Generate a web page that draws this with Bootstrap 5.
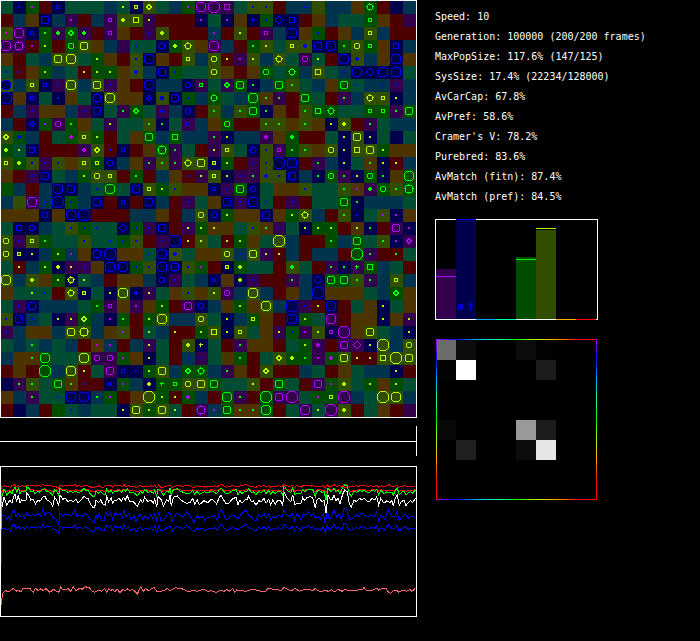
<!DOCTYPE html>
<html lang="en">
<head>
<meta charset="utf-8">
<meta name="viewport" content="width=device-width, initial-scale=1">
<title>Population simulation</title>
<link rel="stylesheet" href="https://cdn.jsdelivr.net/npm/bootstrap@5.3.0/dist/css/bootstrap.min.css">
<style>
  body { background: #000; color: #fff; font-family: "DejaVu Sans Mono", "Liberation Mono", monospace; font-size: 10px; line-height: 20px; }
  svg { shape-rendering: crispEdges; }
  .world { flex: 0 1 417px; min-width: 0; }
  .world svg { width: 100%; height: auto; }
  .panel { flex: 1 0 240px; padding: 7px 0 0 18px; }
  .strip { margin-top: 8px; }
  .history { margin-top: 10px; }
  .bars { margin-top: 12px; }
  .matrix { margin-top: 19px; }
  .sex-label { fill: #00f; font-size: 10px; }
</style>
<script src="https://cdn.jsdelivr.net/npm/bootstrap@5.3.0/dist/js/bootstrap.bundle.min.js"></script>
</head>
<body>
<main class="d-flex align-items-start">
  <section class="world" aria-label="World">
    <svg id="grid" class="d-block" viewBox="0 0 417 418" role="img" aria-label="Habitat grid"></svg>
    <svg class="d-block strip" viewBox="0 0 417 30" aria-hidden="true">
      <path d="M0 15h417v1h-417zM416 0h1v30h-1z" fill="#fff"/>
    </svg>
    <svg id="history" class="d-block history" viewBox="0 0 417 151" role="img" aria-label="History"></svg>
  </section>
  <section class="panel" aria-label="Statistics">
    <ul class="list-unstyled mb-0 text-nowrap">
      <li>Speed: 10</li>
      <li>Generation: 100000 (200/200 frames)</li>
      <li>MaxPopSize: 117.6% (147/125)</li>
      <li>SysSize: 17.4% (22234/128000)</li>
      <li>AvCarCap: 67.8%</li>
      <li>AvPref: 58.6%</li>
      <li>Cramer's V: 78.2%</li>
      <li>Purebred: 83.6%</li>
      <li>AvMatch (fitn): 87.4%</li>
      <li>AvMatch (pref): 84.5%</li>
    </ul>
    <svg class="d-block bars" width="163" height="101" viewBox="0 0 163 101" role="img" aria-label="Population by type">
      <rect x="0.5" y="0.5" width="162" height="100" fill="none" stroke="#fff"/>
      <path fill="#33004d" d="M1 50h20v50h-20z"/>
      <path fill="#00004d" d="M21 0h20v100h-20z"/>
      <path fill="#004d00" d="M81 38h20v62h-20z"/>
      <path fill="#334d00" d="M101 11h20v89h-20z"/>
      <path fill="#b300ff" d="M1 57h20v1h-20z"/>
      <path fill="#00f" d="M21 0h20v1h-20z"/>
      <path fill="#0f0" d="M81 40h20v1h-20z"/>
      <path fill="#b3ff00" d="M101 9h20v1h-20z"/>
      <path fill="#00aaff" d="M41 100h20v1h-20z"/>
      <path fill="#00ffaa" d="M61 100h20v1h-20z"/>
      <path fill="#ffaa00" d="M121 100h20v1h-20z"/>
      <path fill="#f00" d="M141 100h20v1h-20z"/>
      <text class="sex-label" x="23" y="91">m</text>
      <text class="sex-label" x="33" y="91">f</text>
    </svg>
    <svg id="matrix" class="d-block matrix" width="163" height="161" viewBox="0 0 163 161" role="img" aria-label="Mating matrix"></svg>
  </section>
</main>
<script>
const dark = {p:'#33004d', b:'#00004d', c:'#00334d', t:'#004d33', g:'#004d00', y:'#334d00', o:'#4d3300', r:'#4d0000'};
const bright = {p:'#b300ff', b:'#0000ff', g:'#00ff00', y:'#b3ff00'};

// One token per cell: ground colour, then optional marker colour and marker shape.
const rows = `
t bb1 gp1 r bbs t t t c ty1 bys yyd t c gp1 ppO ppB ppq t yb1 yb1 r c cb1 y c c o ggk r b c
r c o bbC c pp1 r c pps yy2 yyq py1 r r r bp1 t bp1 o bb+ gb1 bbD bbq r o c t t ggs o r p
yp1 ppO bbs gg1 pg2 ggd pg2 r pps o r pb1 yy2 r r r cp1 r yy1 r pps c bbO o gb1 r o c yys c r r
ppO ppK rp1 gy1 r ggc yyC o c p tb1 t bbk gy2 yyk o ppO c r gg1 yy1 t yys yb2 bbC bbO gg1 yyc ggs o bbq c
o r t c yyC yyO t gy1 o r yb1 bbO o r yys c yyc ry1 pp1 yy1 c yyk t ppc ty1 r bbO yb2 c o bbO o
tb1 rb1 o gy1 c t ry1 gy1 gy1 o yb2 c bbC gb1 t t yyc o r o ggc t ggk c yyQ t cb1 bbO bbD bbO bbO t
ybO c yys bbs pb1 yyO c yyC pb1 o r bbO c c bbc pgs t pgd ggC bg1 c ggC yg1 t c o ggC tb1 c cb1 pb1 c
bbB o bbd t bb1 o t bbK yyO o o bbd ybs bbC gb1 c ggk t c ggO og1 pg1 r ggC t r pg1 c yyk yys by1 c
r c pb1 o o c pb1 bbC t pg1 ggd t pb2 c bbc r yg1 c yg1 ggC bg1 o r yg1 ggq ggk t t ggs ggs pg1 ggC
c r bbd gp1 ppc gg1 o t py1 t t yg1 bg1 t pbs c o ggc r r yg1 yg1 o yg1 o by1 yy2 r pg1 t c c
yyd gb2 c r t gp2 yys gy1 r t o ggC c ggq c c pg1 by1 c c pp2 o gg2 r r t by1 yyC by1 t b t
gy2 ty1 bbq r r r pp2 yyd rb1 bbs r o ggK pg1 t r py1 yys t bbk yb1 pps gg1 yg1 o yyc by1 yyq yyC gy1 o o
yys gy2 yb1 pb1 yb1 o yys gys bbk c o pg1 yg1 pg1 yyk yyC bys gy1 r pb1 yb1 bbB bbO r pg1 c by1 t og1 by1 ry1 c
o r pb1 bbC t c gy1 yyc yys r gg1 r c o rb1 py1 yys by1 pb1 pg1 yb2 yb1 bbC c bg1 ggc pg1 by1 ggc bg1 o ggO
g c r c bbO bbC c tb1 ggO t bbC yys gy1 yb1 o o bbs pb1 ggC bbc t o o yb1 t t yg1 op1 pg2 ggc yg1 ggK
c y ppO cb1 bbB gb1 c bbC r bbs r bbC c r pb1 t o bbC pb1 bbO tb1 r pb1 r t t ggC bg1 c c c t
o o o bbc o bbO bbB r r r c c o r c yyc bbc gy1 o o bbC o gy1 yyk c r yg1 bb1 t yp1 bp1 o
t bbq bbc c t yb1 gb1 tb1 t bbD gb1 pb1 bbC r py1 gy1 oy1 o t yb1 og1 pb1 t by1 gy1 gy1 r oy1 bg1 r ppC bp1
yyc pb1 yys gg1 t t yb1 t tb1 gb1 yb1 r pb1 bbB ry1 yy1 t ry1 gy1 o t yyB c r r gg1 c ggC t yg1 bp1 ppd
yyc bys by1 c gy1 cp1 o bbK bbB o o tb1 bbO yb2 t o o yyc cb1 yyC py1 ry1 c r c c r ggB pg1 r rg1 t
t ry1 c gy1 by2 py1 pb1 o bbO bbO gb1 yb1 bbO bbK yb1 gp1 r bys gy2 t t r yg2 t r pg1 bg1 pg+ ggq c t r
yyO c yy2 o gy1 byk ty1 c r o o c bbc pb1 t c bbs o by2 pb1 r r pg1 c bbD ggC ggC yg1 pg1 c yys c
o t ty1 tb1 r yyk bys t by1 yyO bb2 py1 t o yb1 o yy1 ppc c yyO c r o c bbB o o o t c ggd o
t pb1 bbC c c c t gg1 pps o pp1 o gy1 r ppC bbc c o gy1 o yyO c bbB pb1 ry1 bbO r t o by1 t o
yb1 bbC cb1 t by1 py1 gyd c bp1 gg1 r gy1 yyO c c yyc t by1 c gys o r bbO gy1 t ppO r o o by1 o py1
pb1 c o o c yyC yyK c o yp1 r ty1 c ry1 r gy1 yyq by1 yys t o py1 gb1 pp1 yy1 bps ppB o yyC t c by1
t c tg1 c t c r op1 cp1 r c py1 t r yy2 by+ t r pg1 o o r t gy1 pp2 r ppC ppD by1 yyB c yyc
c o og1 ggO t t yyO ppc ppc gp1 o by1 t r cb1 pb1 t o gg1 r t yyd gy2 gg1 pp1 gp2 yyC ry1 ry1 yyq yyB yyC
r o r ggB c yyO ry1 t ppC bbs bb1 gy1 yyC c ggd ggk c pg1 o r yyd r r c t r o t c c by1 r
b pg1 yg1 t ggC og1 rb1 r bb2 gp1 c by2 gg+ ggs yyc yyC ggC t t yy1 r ggC t r ppC gp1 yy2 t gy1 o gy1 t
o c pg1 t tb1 bbO bbO cg1 gp1 r o yyB gy1 ry1 gp2 c r ggO pg1 r ggB ppC ppB t gp1 gys ppB c t yyB yyO c
r b c r g tb1 c t t by1 yyC gy1 yyC ty1 r ppK cp1 ggC og1 og1 ggO r t ppO ty1 ppB yy2 r t o r p
`.trim().split('\n').map(line => line.split(' '));

// Marker outlines, drawn around the point (0, 0).
const octagon = (r, k) => `M${-k} ${-r}H${k}L${r} ${-k}V${k}L${k} ${r}H${-k}L${-r} ${k}V${-k}Z`;
const shapes = {
  s: 'M-1.5 -1.5H1.5V1.5H-1.5Z',
  q: 'M-2.5 -2.5H2.5V2.5H-2.5Z',
  Q: 'M-2.5 -2.5H2.5V2.5H-2.5Z',
  d: 'M0 -2.5L2.5 0L0 2.5L-2.5 0Z',
  D: 'M0 -4L4 0L0 4L-4 0Z',
  c: octagon(2.5, 1.5),
  k: octagon(2.5, 1.5) + 'M-.5 -4V-2M-.5 2V4M-4 -.5H-2M2 -.5H4',
  C: octagon(3.5, 2.5),
  K: octagon(3.5, 2.5) + 'M-.5 -5V-3M-.5 3V5M-5 -.5H-3M3 -.5H5',
  O: octagon(4.5, 2.5),
  B: octagon(5.5, 2.5)
};
const solids = {
  '1': 'M-1 -1h2v2h-2z',
  '2': 'M-1 -2h2v1h1v2h-1v1h-2v-1h-1v-2h1z',
  '+': 'M-1 -2h1v1h2v1h-2v2h-1v-2h-1v-1h1z'
};

let ground = '', marks = '';
rows.forEach((row, j) => row.forEach((cell, i) => {
  const x = i * 13, y = 1 + j * 13;
  ground += `<rect x="${x}" y="${y}" width="13" height="13" fill="${dark[cell[0]]}"/>`;
  if (cell.length < 3) return;
  const hue = cell[1], kind = cell[2], at = `transform="translate(${x + 6} ${y + 6})"`;
  marks += solids[kind]
    ? `<path ${at} d="${solids[kind]}" fill="${bright[hue]}"/>`
    : `<path ${at} d="${shapes[kind]}" fill="${dark[hue]}" stroke="${bright[hue]}"/>`;
}));
document.getElementById('grid').innerHTML = ground + marks +
  '<rect x="0.5" y="0.5" width="416" height="417" fill="none" stroke="#fff"/>';

// History samples: "time:level" in thirds of a unit, level measured down from the plot's zero.
const parse = text => text.trim().split(/\s+/).map(p => p.split(':').map(Number));
const pref = parse(`3:265 6:262 12:230 20:256 30:240 36:250 40:232 45:222 50:245 55:225 60:250 65:240 72:242 78:240 80:220 86:225 92:240 100:238 106:252 114:240 120:244 128:232 134:228 140:240 150:245 158:258 164:232 170:240 176:258 180:225 188:238 196:235 204:245 212:240 220:245 228:238 234:248 244:240 252:228 258:235 264:235 270:250 278:262 284:262 288:240 296:248 302:240 308:252 316:255 320:230 326:245 334:235 338:250 344:240 350:240 358:235 364:245 370:232 376:240 382:228 390:245 400:245 406:252 412:260 422:240 428:248 434:232 444:245 452:240 460:250 464:235 470:262 474:230 484:240 490:258 500:240 506:246 510:225 514:258 520:232 532:228 540:238 550:245 560:250 570:248 578:235 584:252 592:240 598:254 606:248 612:242 624:248
634:238 640:240 650:252 658:232 664:226 670:238 678:252 686:250 696:238 708:232 714:254 720:240 726:250 734:240 742:238 746:228 754:245 760:242 768:256 776:242 784:245 792:235 798:250 806:238 812:255 818:240 826:252 834:240 842:242 848:258 852:215 858:228 864:238 872:245 878:225 884:254 892:250 902:252 908:232 914:242 922:232 930:230 938:232 946:265 950:240 958:235 966:245 972:240 978:278 984:225 990:238 996:240 1002:225 1008:242 1014:235 1020:252 1028:222 1034:210 1042:215 1048:250 1054:262 1062:240 1070:245 1078:235 1086:240 1092:235 1100:243 1108:245 1116:235 1124:240 1130:230 1136:256 1142:235 1152:250 1160:242 1170:248 1176:242 1180:258 1186:235 1192:225 1198:256 1204:245 1212:240 1218:258 1224:248 1232:242 1238:248 1246:235`);
const cap = parse(`3:436 6:288 14:287 20:297 26:290 32:302 36:280 42:270 48:290 54:280 60:290 68:283 74:294 80:278 88:288 98:284 106:288 114:280 122:288 130:265 134:285 142:278 150:278 158:292 168:296 176:312 180:278 188:288 196:282 206:285 216:285 226:270 230:290 238:284 246:290 254:280 264:288 272:300 282:308 288:285 292:296 298:280 304:300 312:302 318:275 324:288 332:275 338:300 346:275 352:287 360:280 368:294 372:270 378:290 386:280 392:297 402:289 408:305 414:290 420:282 428:298 436:288 444:296 452:285 460:298 464:278 470:305 476:275 482:300 490:300 498:290 506:278 512:280 516:305 522:290 530:280 540:285 550:292 560:275 568:285 574:294 582:308 592:285 598:295 606:288 614:300 624:292
634:290 644:286 652:300 658:280 664:268 670:280 678:300 686:296 696:285 706:289 714:296 722:285 730:276 738:270 746:286 754:290 762:300 768:302 776:284 784:292 792:280 798:295 806:282 812:300 818:289 826:295 834:285 846:292 852:270 860:285 870:290 876:280 884:302 890:282 898:290 904:300 910:280 918:286 926:275 934:288 940:280 946:297 954:289 962:298 970:280 976:312 982:272 988:300 996:285 1002:270 1010:290 1018:283 1024:300 1032:265 1040:270 1048:300 1058:295 1068:284 1076:291 1084:278 1094:286 1104:290 1114:284 1122:290 1130:276 1136:302 1144:284 1154:298 1160:282 1166:270 1174:288 1184:290 1190:275 1198:302 1206:290 1216:282 1224:295 1234:288 1246:292`);
const size = parse(`3:556 8:520 16:512 28:515 40:505 48:514 54:510 62:516 68:506 90:506 100:516 108:503 114:513 122:506 130:512 138:506 150:517 160:508 176:517 182:500 188:509 205:506 212:514 220:500 228:512 240:504 246:508 256:500 268:503 276:514 284:517 298:510 306:514 314:505 320:516 326:506 332:512 338:507 344:515 352:508 360:518 370:508 376:512 384:506 390:514 396:508 402:512 412:522 422:500 430:514 436:506 446:512 462:502 470:514 482:514 496:510 502:505 510:512 526:503 546:506 566:516 580:510 592:514 602:510 612:508 624:515
634:512 648:517 664:510 672:514 680:508 688:514 698:505 704:518 710:510 724:512 738:514 754:509 768:510 784:514 798:513 804:504 820:508 838:510 846:510 852:502 862:508 874:512 886:505 898:514 914:508 928:508 938:512 946:505 954:512 964:516 974:511 986:514 994:509 1004:516 1014:508 1026:514 1034:508 1050:512 1070:512 1080:508 1088:508 1092:502 1098:510 1120:510 1130:505 1136:511 1144:507 1158:505 1166:518 1172:520 1182:511 1190:510 1196:516 1210:511 1220:514 1230:508 1236:514 1244:506`);

const trace = (data, colour, from, to, gain, start) =>
  `<polyline fill="none" stroke="${colour}" points="` + data.map(([t, v], n) => {
    const level = n === 0 && start ? start : to + (v - from) * gain;
    return `${(t / 3).toFixed(1)},${((level - 138) / 3).toFixed(1)}`;
  }).join(' ') + '"/>';

document.getElementById('history').innerHTML =
  trace(size, '#ff6666', 0, 0, 1) +
  trace(cap, '#0000ff', 287, 324, 0.6, 370) +
  trace(cap, '#0000ff', 0, 0, 1) +
  trace(cap, '#ff0000', 287, 198, 0.25, 265) +
  trace(pref, '#ff0000', 240, 210, 0.25, 265) +
  trace(pref, '#ffffff', 0, 0, 1) +
  trace(pref, '#00ff00', 240, 214, 0.65, 330) +
  '<rect x="0.5" y="0.5" width="416" height="150" fill="none" stroke="#fff"/>';

// Matrix entries: column, row, grey level.
const entries = [[0,0,108],[1,0,12],[4,0,12],[5,0,2],[0,1,3],[1,1,255],[5,1,28],[0,4,8],[4,4,153],[5,4,28],[1,5,32],[4,5,12],[5,5,230]];
const stops = ['#b300ff','#0000ff','#00aaff','#00ffaa','#00ff00','#b3ff00','#ffaa00','#ff0000']
  .map((c, i) => `<stop offset="${i * 12.5}%" stop-color="${c}"/>`).join('');
document.getElementById('matrix').innerHTML =
  `<defs><linearGradient id="across">${stops}</linearGradient><linearGradient id="down" x2="0" y2="1">${stops}</linearGradient></defs>` +
  entries.map(([i, j, v]) => `<rect x="${1 + i * 20}" y="${1 + j * 20}" width="20" height="20" fill="rgb(${v},${v},${v})"/>`).join('') +
  '<rect x="1" y="0" width="161" height="1" fill="url(#across)"/><rect x="1" y="160" width="161" height="1" fill="url(#across)"/>' +
  '<rect x="1" y="0" width="1" height="161" fill="url(#down)"/><rect x="161" y="0" width="1" height="161" fill="url(#down)"/>';
</script>
</body>
</html>
